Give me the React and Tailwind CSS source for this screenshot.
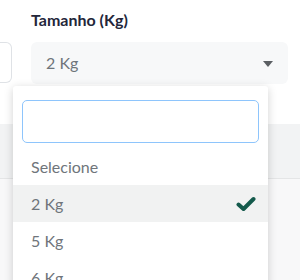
import React from 'react';

const options = ['Selecione', '2 Kg', '5 Kg', '6 Kg', '10 Kg'];

export default function App() {
  const selected = '2 Kg';

  return (
    <div className="relative w-[300px] h-[280px] overflow-hidden bg-white font-['Lato','Open_Sans',sans-serif]">
      {/* Form area */}
      <div className="h-[124px] bg-white">
        <div className="flex gap-[19px] pt-[8px]">
          <div className="w-[12px] mt-[34px] h-[41px] border-y border-r border-[#dfe2e6] rounded-r-md bg-white" />
          <div className="flex-1 pr-[12px]">
            <label className="block text-[16px] font-bold text-[#23263a] leading-[23px] mb-[11px]">
              Tamanho (Kg)
            </label>
            <div className="h-[42px] rounded-md bg-[#f7f8f9] flex items-center justify-between pl-[15px] pr-[15px]">
              <span className="text-[16px] text-[#6f757b]">2 Kg</span>
              <svg width="10" height="6" viewBox="0 0 10 6" className="mt-[1px]">
                <path d="M0 0 L10 0 L5 6 Z" fill="#5b5f63" />
              </svg>
            </div>
          </div>
        </div>
      </div>
      <div className="h-[55px] bg-[#f2f3f4] border-b border-[#e4e5e6]" />
      <div className="h-[101px] bg-[#f8f8f9]" />

      {/* Dropdown overlay */}
      <div className="absolute left-[13px] top-[86px] w-[255px] bg-white rounded-t-[3px] shadow-[0_2px_10px_rgba(0,0,0,0.18)]">
        <div className="px-[9px] pt-[14px] pb-[5px]">
          <div className="h-[43px] rounded-[5px] border border-[#8ec5fc] bg-white" />
        </div>
        <ul>
          {options.map((opt) => (
            <li
              key={opt}
              className={`h-[37px] flex items-center justify-between pl-[18px] pr-[12px] text-[16px] text-[#6f757b] ${
                opt === selected ? 'bg-[#f1f2f2]' : ''
              }`}
            >
              <span>{opt}</span>
              {opt === selected && (
                <svg width="20" height="16" viewBox="0 0 20 16">
                  <path
                    d="M2.5 8.5 L7.5 13 L17.5 3"
                    fill="none"
                    stroke="#145a4c"
                    strokeWidth="4"
                    strokeLinecap="round"
                    strokeLinejoin="round"
                  />
                </svg>
              )}
            </li>
          ))}
        </ul>
      </div>
    </div>
  );
}
